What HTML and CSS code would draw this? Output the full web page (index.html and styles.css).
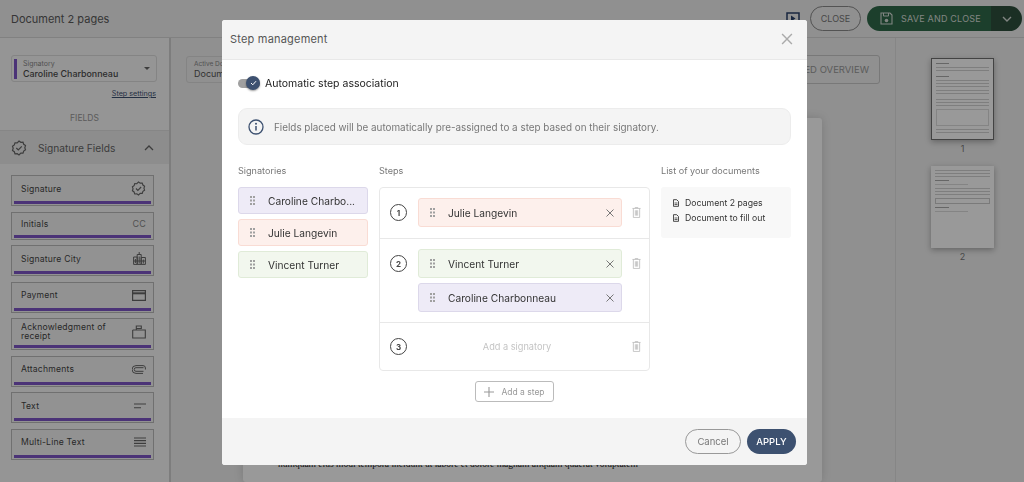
FILE: index.html
```html
<!DOCTYPE html>
<html lang="en">
<head>
    <meta charset="UTF-8">
    <meta name="viewport" content="width=device-width, initial-scale=1.0">
    <title>Step management</title>
    <link rel="stylesheet" href="styles.css">
</head>
<body>
<svg class="sprites" width="0" height="0">
    <symbol id="i-badge" viewBox="0 0 16 16"><path d="M8 1l1.8 1.3 2.2-.1.7 2.1 1.8 1.3-.7 2.1.7 2.1-1.8 1.3-.7 2.1-2.2-.1L8 15l-1.8-1.3-2.2.1-.7-2.1-1.8-1.3.7-2.1-.7-2.1 1.8-1.3.7-2.1 2.2.1z" fill="none" stroke="currentColor" stroke-width="1.2"/><path d="M5.3 8l2 2 3.5-3.6" fill="none" stroke="currentColor" stroke-width="1.2"/></symbol>
    <symbol id="i-trash" viewBox="0 0 10 12"><path d="M.5 1.5h9M3.5 1.5V.5h3v1M1.5 1.5v10h7v-10M3.7 3.5v6M5 3.5v6M6.3 3.5v6" fill="none" stroke="currentColor" stroke-width=".9"/></symbol>
    <symbol id="i-x" viewBox="0 0 10 10"><path d="M1.5 1.5l7 7M8.5 1.5l-7 7" fill="none" stroke="currentColor" stroke-width="1"/></symbol>
    <symbol id="i-grip" viewBox="0 0 5 9"><path d="M0 0h2v2H0zM3 0h2v2H3zM0 3.5h2v2H0zM3 3.5h2v2H3zM0 7h2v2H0zM3 7h2v2H3z" fill="currentColor"/></symbol>
    <symbol id="i-file" viewBox="0 0 8 10"><path d="M.6.6h4.3l2.5 2.5v6.3H.6z" fill="none" stroke="currentColor" stroke-width="1.2"/><path d="M2 5h4M2 7h4" stroke="currentColor" stroke-width="1"/></symbol>
</svg>

<div class="app">
    <div class="topbar">
        <div class="doc-title">Document 2 pages</div>
        <div class="top-actions">
            <svg class="play-icon" width="14" height="13" viewBox="0 0 14 13"><path d="M1 1h12v11H1z" fill="none" stroke="currentColor" stroke-width="1.5"/><path d="M5 3.5l4.5 3-4.5 3z" fill="currentColor"/></svg>
            <button class="btn-close">CLOSE</button>
            <div class="btn-save">
                <span class="save-main">
                    <svg width="13" height="13" viewBox="0 0 13 13"><path d="M1 1h9l2 2v9H1z" fill="none" stroke="currentColor" stroke-width="1.1"/><path d="M3.5 1v3h5V1" fill="none" stroke="currentColor"/><circle cx="6.5" cy="8.5" r="1.8" fill="currentColor"/></svg>
                    SAVE AND CLOSE
                </span>
                <span class="save-more">
                    <svg width="10" height="6" viewBox="0 0 10 6"><path d="M1 1l4 4 4-4" fill="none" stroke="currentColor" stroke-width="1.4"/></svg>
                </span>
            </div>
        </div>
    </div>

    <div class="main">
        <aside class="sidebar">
            <div class="select-box">
                <span class="select-mark"></span>
                <div class="select-text">
                    <small>Signatory</small>
                    <strong>Caroline Charbonneau</strong>
                </div>
                <span class="select-arrow"></span>
            </div>
            <a class="step-settings">Step settings</a>
            <div class="fields-title">FIELDS</div>
            <div class="acc-head">
                <svg class="acc-icon" width="16" height="16"><use href="#i-badge"/></svg>
                <span>Signature Fields</span>
                <svg class="acc-chevron" width="10" height="6" viewBox="0 0 10 6"><path d="M1 5l4-4 4 4" fill="none" stroke="currentColor" stroke-width="1.3"/></svg>
            </div>
            <div class="field-list">
                <div class="field">
                    <span>Signature</span>
                    <svg width="15" height="15"><use href="#i-badge"/></svg>
                </div>
                <div class="field field-short">
                    <span>Initials</span>
                    <em>CC</em>
                </div>
                <div class="field">
                    <span>Signature City</span>
                    <svg width="13" height="13" viewBox="0 0 13 13"><path d="M.6 5h3.600v7.400H.6zM4.200 2.500h4v9.900h-4zM8.200 5.500h4.200v6.900H8.200zM6.200 0v2.500M2.400 7v4M6.200 4.500v7M10.300 7.500v4M.6 9h11.800" fill="none" stroke="currentColor" stroke-width="1"/></svg>
                </div>
                <div class="field">
                    <span>Payment</span>
                    <svg width="14" height="11" viewBox="0 0 14 11"><path d="M.6.6h12.800v9.800H.6z" fill="none" stroke="currentColor" stroke-width="1.2"/><path d="M.6 3.300h12.800" stroke="currentColor" stroke-width="2"/></svg>
                </div>
                <div class="field field-tall">
                    <span>Acknowledgment of receipt</span>
                    <svg width="14" height="14" viewBox="0 0 14 14"><path d="M.7 5h3.600V1h5v2.500h-5M4.300 5h9v8H.7V5" fill="none" stroke="currentColor" stroke-width="1.1"/></svg>
                </div>
                <div class="field">
                    <span>Attachments</span>
                    <svg width="14" height="9" viewBox="0 0 14 9"><path d="M13.400 4.500V3A2.400 2.400 0 0 0 11 .6H4a3.900 3.900 0 0 0 0 7.800h7M11.500 6.300H4a1.800 1.800 0 0 1 0-3.600h7.500" fill="none" stroke="currentColor" stroke-width="1"/></svg>
                </div>
                <div class="field">
                    <span>Text</span>
                    <svg width="12" height="6" viewBox="0 0 12 6"><path d="M0 1h12M0 4.700h7" stroke="currentColor" stroke-width="1.1"/></svg>
                </div>
                <div class="field">
                    <span>Multi-Line Text</span>
                    <svg width="12" height="11" viewBox="0 0 12 11"><path d="M0 1h12M0 3.700h12M0 6.300h12M0 9h12" stroke="currentColor" stroke-width="1.2"/></svg>
                </div>
            </div>
        </aside>

        <section class="center">
            <div class="center-bar">
                <div class="active-doc">
                    <small>Active Document</small>
                    <strong>Document 2 pages</strong>
                </div>
                <button class="overview">SIGNED OVERVIEW</button>
            </div>
            <div class="paper">
                <p>numquam eius modi tempora incidunt ut labore et dolore magnam aliquam quaerat voluptatem</p>
            </div>
        </section>

        <aside class="thumbs">
            <div class="thumb">
                <div class="page page-active"><i></i><i class="lines"></i><i></i><i class="lines"></i><i class="lines"></i><i class="lines"></i><i class="table"></i><i class="lines"></i></div>
                <span>1</span>
            </div>
            <div class="thumb">
                <div class="page"><i class="lines"></i><i></i><i class="rule"></i><i class="lines"></i><i class="box"></i><i></i><i class="rule"></i></div>
                <span>2</span>
            </div>
        </aside>
    </div>
</div>

<div class="overlay"></div>

<div class="modal">
    <div class="modal-head">
        <h2>Step management</h2>
        <svg class="modal-x" width="14" height="14"><use href="#i-x"/></svg>
    </div>
    <div class="modal-body">
        <div class="auto-row">
            <span class="toggle">
                <span class="toggle-knob">
                    <svg width="7" height="6" viewBox="0 0 7 6"><path d="M1 3l1.800 1.800L6 1.200" fill="none" stroke="currentColor" stroke-width="1"/></svg>
                </span>
            </span>
            <span>Automatic step association</span>
        </div>
        <div class="info-box">
            <svg width="16" height="16" viewBox="0 0 16 16"><circle cx="8" cy="8" r="7" fill="none" stroke="currentColor" stroke-width="1.3"/><path d="M8 7v4.500" stroke="currentColor" stroke-width="1.5"/><circle cx="8" cy="4.800" r="1" fill="currentColor"/></svg>
            <span>Fields placed will be automatically pre-assigned to a step based on their signatory.</span>
        </div>
        <div class="columns">
            <div class="col-signers">
                <h3>Signatories</h3>
                <div class="chip-stack">
                    <div class="chip chip-purple"><svg class="grip" width="5" height="9"><use href="#i-grip"/></svg><span>Caroline Charbo...</span></div>
                    <div class="chip chip-red"><svg class="grip" width="5" height="9"><use href="#i-grip"/></svg><span>Julie Langevin</span></div>
                    <div class="chip chip-green"><svg class="grip" width="5" height="9"><use href="#i-grip"/></svg><span>Vincent Turner</span></div>
                </div>
            </div>
            <div class="col-steps">
                <h3>Steps</h3>
                <div class="steps-box">
                    <div class="step step-first">
                        <span class="step-num">1</span>
                        <div class="step-chips">
                            <div class="chip chip-red step-chip"><svg class="grip" width="5" height="9"><use href="#i-grip"/></svg><span>Julie Langevin</span><svg class="chip-x" width="10" height="10"><use href="#i-x"/></svg></div>
                        </div>
                        <svg class="trash" width="9" height="11"><use href="#i-trash"/></svg>
                    </div>
                    <div class="step">
                        <span class="step-num">2</span>
                        <div class="step-chips">
                            <div class="chip chip-green step-chip"><svg class="grip" width="5" height="9"><use href="#i-grip"/></svg><span>Vincent Turner</span><svg class="chip-x" width="10" height="10"><use href="#i-x"/></svg></div>
                            <div class="chip chip-purple step-chip"><svg class="grip" width="5" height="9"><use href="#i-grip"/></svg><span>Caroline Charbonneau</span><svg class="chip-x" width="10" height="10"><use href="#i-x"/></svg></div>
                        </div>
                        <svg class="trash" width="9" height="11"><use href="#i-trash"/></svg>
                    </div>
                    <div class="step step-empty">
                        <span class="step-num">3</span>
                        <div class="step-chips"><span class="add-signer">Add a signatory</span></div>
                        <svg class="trash" width="9" height="11"><use href="#i-trash"/></svg>
                    </div>
                </div>
                <button class="add-step">
                    <svg width="10" height="10" viewBox="0 0 10 10"><path d="M5 0v10M0 5h10" stroke="currentColor" stroke-width="1.1"/></svg>
                    Add a step
                </button>
            </div>
            <div class="col-docs">
                <h3>List of your documents</h3>
                <div class="docs-box">
                    <div class="doc-row"><svg width="6" height="8"><use href="#i-file"/></svg>Document 2 pages</div>
                    <div class="doc-row"><svg width="6" height="8"><use href="#i-file"/></svg>Document to fill out</div>
                </div>
            </div>
        </div>
    </div>
    <div class="modal-foot">
        <button class="btn-cancel">Cancel</button>
        <button class="btn-apply">APPLY</button>
    </div>
</div>
</body>
</html>
```

FILE: styles.css
```css
* {
    margin: 0;
    padding: 0;
    box-sizing: border-box;
    font-family: 'Inter', 'Open Sans', sans-serif;
}

body {
    width: 1024px;
    height: 482px;
    overflow: hidden;
    background: #fff;
}

button {
    background: none;
    cursor: pointer;
}

svg {
    display: block;
    flex-shrink: 0;
}

.sprites {
    position: absolute;
}

.app {
    height: 482px;
    display: flex;
    flex-direction: column;
    background: #f7f7f7;
}

.topbar {
    height: 38px;
    flex-shrink: 0;
    display: flex;
    align-items: center;
    justify-content: space-between;
    padding: 0 2px 0 11px;
    background: #f0f0f0;
    border-bottom: 1px solid #d8d8d8;
}

.doc-title {
    font-size: 11px;
    color: #5a5a5a;
}

.top-actions {
    display: flex;
    align-items: center;
}

.play-icon {
    color: #29406a;
    margin-right: 10px;
}

.btn-close {
    width: 51px;
    height: 25px;
    margin-right: 6px;
    border: 1px solid #8a8a8a;
    border-radius: 13px;
    font-size: 9px;
    color: #777;
}

.btn-save {
    width: 155px;
    height: 25px;
    display: flex;
    border-radius: 13px;
    overflow: hidden;
    color: #d8ded9;
    font-size: 9px;
    letter-spacing: .2px;
}

.save-main {
    flex: 1;
    display: flex;
    align-items: center;
    gap: 8px;
    padding-left: 13px;
    background: #2f6a4a;
}

.save-more {
    width: 31px;
    display: flex;
    align-items: center;
    justify-content: center;
    background: #2d4f3c;
}

.main {
    flex: 1;
    display: flex;
    min-height: 0;
}

.sidebar {
    width: 171px;
    flex-shrink: 0;
    padding-top: 17px;
    background: #f8f8f8;
    border-right: 2px solid #d0d0d0;
}

.select-box {
    width: 146px;
    height: 27px;
    margin-left: 11px;
    display: flex;
    align-items: center;
    gap: 6px;
    padding: 0 6px 0 2px;
    border: 1px solid #dcdcdc;
    border-radius: 3px;
}

.select-mark {
    width: 3px;
    height: 20px;
    background: #7d55c7;
}

.select-text {
    flex: 1;
    display: flex;
    flex-direction: column;
}

.select-text small {
    font-size: 7px;
    color: #888;
}

.select-text strong {
    font-size: 8.9px;
    font-weight: 500;
    color: #4a4a4a;
}

.select-arrow {
    width: 0;
    height: 0;
    border-left: 3.5px solid transparent;
    border-right: 3.5px solid transparent;
    border-top: 3.5px solid #666;
}

.step-settings {
    display: block;
    margin: 7px 13px 0 0;
    text-align: right;
    font-size: 7.2px;
    color: #3d5170;
    text-decoration: underline;
}

.fields-title {
    margin-top: 15px;
    text-align: center;
    font-size: 8.5px;
    color: #999;
}

.acc-head {
    height: 34px;
    margin-top: 7px;
    display: flex;
    align-items: center;
    padding: 0 15px 0 11px;
    background: #ececec;
    border-top: 1px solid #e0e0e0;
    font-size: 10.2px;
    color: #666;
}

.acc-icon {
    margin-right: 11px;
}

.acc-chevron {
    margin-left: auto;
}

.field-list {
    padding: 11px 15px 0 11px;
    display: flex;
    flex-direction: column;
    gap: 5.5px;
}

.field {
    height: 31px;
    display: flex;
    align-items: center;
    justify-content: space-between;
    padding: 0 7px 4px 9px;
    border: 1px solid #bbb;
    font-size: 8.6px;
    letter-spacing: .2px;
    color: #444;
    background: linear-gradient(#7d55c7, #7d55c7) center bottom 1px / calc(100% - 4px) 3px no-repeat, #f4f4f4;
}

.field svg {
    color: #666;
}

.field em {
    font-style: normal;
    font-size: 9px;
    color: #888;
}

.field-short {
    height: 28px;
}

.field-tall {
    height: 32px;
    line-height: 9.5px;
}

.field-tall span {
    width: 100px;
}

.center {
    flex: 1;
    padding: 17px 15px 0;
    display: flex;
    flex-direction: column;
    background: #f0f0f0;
    border-right: 1px solid #e0e0e0;
}

.center-bar {
    display: flex;
    align-items: center;
    justify-content: space-between;
}

.active-doc {
    width: 150px;
    height: 27px;
    padding: 3px 7px;
    display: flex;
    flex-direction: column;
    border: 1px solid #dcdcdc;
    border-radius: 3px;
}

.active-doc small {
    font-size: 6.5px;
    color: #888;
}

.active-doc strong {
    font-size: 9px;
    font-weight: 400;
    color: #555;
}

.overview {
    width: 170px;
    height: 29px;
    border: 1px solid #c8c8c8;
    border-radius: 3px;
    font-size: 9.5px;
    color: #999;
    text-align: right;
    padding-right: 10px;
}

.paper {
    width: 579px;
    flex: 1;
    margin: 34px 0 0 57px;
    background: #fff;
    border-radius: 3px;
    box-shadow: 0 0 10px rgba(0, 0, 0, .15);
    display: flex;
    flex-direction: column;
    justify-content: flex-end;
    padding: 0 30px 13px 35px;
}

.paper p {
    font-family: 'Liberation Serif', serif;
    font-size: 9.5px;
    color: #222;
    white-space: nowrap;
}

.thumbs {
    width: 128px;
    flex-shrink: 0;
    padding: 20px 0 0 5px;
    display: flex;
    flex-direction: column;
    align-items: center;
    gap: 12px;
    background: #f0f0f0;
}

.thumb {
    display: flex;
    flex-direction: column;
    align-items: center;
    gap: 3px;
    font-size: 9px;
    color: #777;
}

.page {
    width: 63px;
    height: 82px;
    padding: 4px;
    display: flex;
    flex-direction: column;
    gap: 3px;
    background: #fff;
    box-shadow: 0 2px 6px rgba(0, 0, 0, .3);
}

.page-active {
    border: 1px solid #707070;
}

.page i {
    display: block;
    height: 1px;
    width: 25%;
    background: #aaa;
}

.page i.lines {
    width: 100%;
    height: 7px;
    background: repeating-linear-gradient(#d2d2d2 0 1px, transparent 1px 3px);
}

.page i.table {
    width: 100%;
    height: 18px;
    background: none;
    border: 1px solid #ddd;
}

.page i.rule {
    width: 60%;
    background: #ddd;
}

.page i.box {
    width: 100%;
    height: 6px;
    background: none;
    border: 1px solid #ccc;
}

.overlay {
    position: fixed;
    inset: 0;
    background: rgba(0, 0, 0, .4);
}

.modal {
    position: fixed;
    left: 222px;
    top: 20px;
    width: 585px;
    height: 445px;
    display: flex;
    flex-direction: column;
    background: #fff;
    border-radius: 3px;
    overflow: hidden;
}

.modal-head {
    height: 40px;
    flex-shrink: 0;
    display: flex;
    align-items: center;
    justify-content: space-between;
    padding: 0 13px 2px 8px;
    background: #f4f4f4;
    border-bottom: 1px solid #e8e8e8;
}

.modal-head h2 {
    font-size: 11px;
    font-weight: 400;
    color: #555;
    letter-spacing: .2px;
}

.modal-x {
    color: #aaa;
}

.modal-body {
    flex: 1;
    padding: 16px 16px 0;
}

.auto-row {
    height: 15px;
    display: flex;
    align-items: center;
    gap: 5px;
    font-size: 10.5px;
    color: #222;
}

.toggle {
    position: relative;
    width: 22px;
    height: 9px;
    background: #a0a0a0;
    border-radius: 5px;
}

.toggle-knob {
    position: absolute;
    right: 0;
    top: -3px;
    width: 14px;
    height: 14px;
    display: flex;
    align-items: center;
    justify-content: center;
    border-radius: 50%;
    background: #3d5170;
    color: #fff;
    box-shadow: 0 1px 2px rgba(0, 0, 0, .4);
}

.info-box {
    height: 37px;
    margin-top: 17px;
    display: flex;
    align-items: center;
    gap: 10px;
    padding: 0 9px;
    background: #f4f4f4;
    border: 1px solid #ececec;
    border-radius: 9px;
    font-size: 9.87px;
    color: #777;
}

.info-box svg {
    color: #3d5170;
}

.columns {
    display: flex;
    gap: 11px;
    margin-top: 20px;
}

.columns h3 {
    height: 12px;
    margin-bottom: 10px;
    font-size: 9.1px;
    font-weight: 400;
    color: #777;
}

.col-signers {
    width: 130px;
}

.col-steps {
    width: 271px;
}

.col-docs {
    width: 130px;
}

.chip-stack {
    display: flex;
    flex-direction: column;
    gap: 5px;
}

.chip {
    height: 27px;
    display: flex;
    align-items: center;
    gap: 13px;
    padding-left: 11px;
    border: 1px solid;
    border-radius: 3px;
    font-size: 10.2px;
    color: #333;
}

.grip {
    color: #a0a0a0;
}

.chip-purple {
    background: #eeebf7;
    border-color: #dcd8ea;
}

.chip-red {
    background: #fdf0ec;
    border-color: #f9dcd4;
}

.chip-green {
    background: #f2f7ee;
    border-color: #e0ebd8;
}

.steps-box {
    height: 184px;
    display: flex;
    flex-direction: column;
    border: 1px solid #e8e8e8;
    border-radius: 4px;
}

.step {
    display: flex;
    align-items: flex-start;
    padding: 10px 0 10px 10px;
    border-bottom: 1px solid #e8e8e8;
}

.step-first {
    padding-bottom: 11px;
}

.step-empty {
    flex: 1;
    align-items: center;
    border-bottom: none;
}

.step-num {
    width: 17px;
    height: 17px;
    margin: 6px 11px 0 0;
    flex-shrink: 0;
    display: flex;
    align-items: center;
    justify-content: center;
    border: 1px solid #444;
    border-radius: 50%;
    font-size: 8px;
    font-weight: 700;
    color: #444;
}

.step-empty .step-num {
    margin-top: 0;
}

.step-chips {
    width: 204px;
    display: flex;
    flex-direction: column;
    gap: 5px;
}

.step-chip {
    height: 29px;
}

.chip-x {
    margin: 0 6px 0 auto;
    color: #777;
}

.trash {
    margin: 9px 0 0 10px;
    color: #bbb;
}

.step-empty .trash {
    margin-top: 0;
}

.add-signer {
    padding-right: 6px;
    text-align: center;
    font-size: 9.2px;
    color: #c4c4c4;
}

.add-step {
    width: 79px;
    height: 21px;
    margin: 10px auto 0;
    display: flex;
    align-items: center;
    justify-content: center;
    gap: 7px;
    border: 1px solid #bbb;
    border-radius: 3px;
    font-size: 8.5px;
    color: #999;
}

.docs-box {
    height: 51px;
    display: flex;
    flex-direction: column;
    justify-content: center;
    gap: 5px;
    padding: 0 0 4px 12px;
    background: #f8f8f8;
    border-radius: 3px;
}

.doc-row {
    display: flex;
    align-items: center;
    gap: 6px;
    font-size: 8.7px;
    color: #333;
}

.modal-foot {
    height: 47px;
    flex-shrink: 0;
    display: flex;
    align-items: center;
    justify-content: flex-end;
    gap: 6px;
    padding-right: 11px;
    background: #f4f4f4;
}

.btn-cancel,
.btn-apply {
    height: 25px;
    border-radius: 13px;
    font-size: 9.5px;
}

.btn-cancel {
    width: 56px;
    border: 1px solid #999;
    color: #777;
}

.btn-apply {
    width: 49px;
    border: none;
    background: #3d5170;
    color: #fff;
    font-weight: 500;
}
```
